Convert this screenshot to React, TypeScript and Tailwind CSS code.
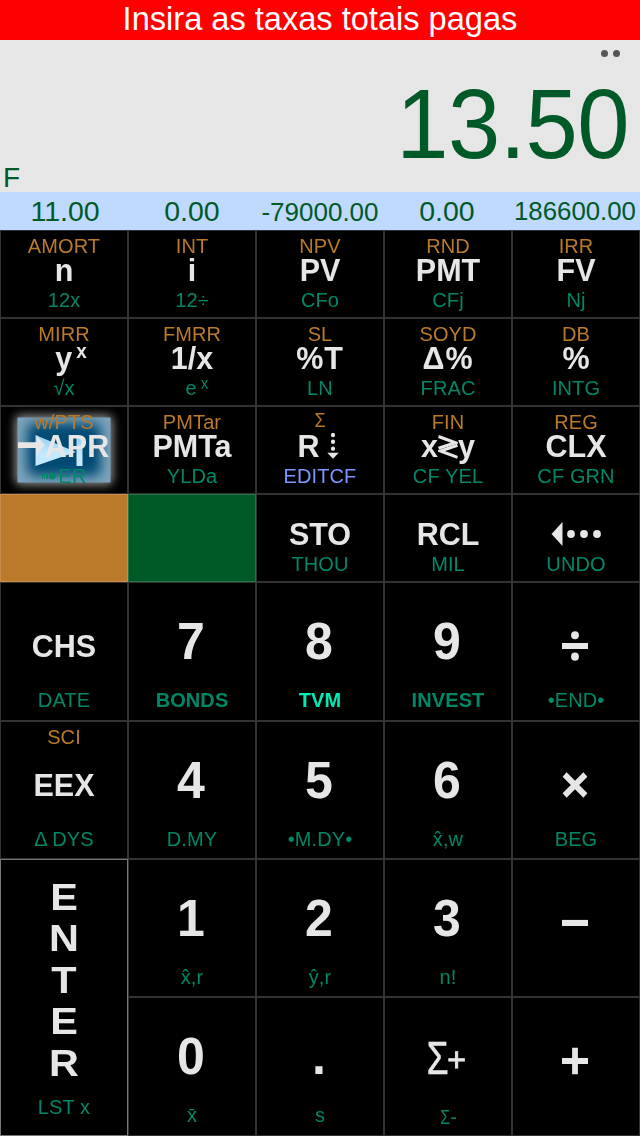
import type { ReactNode } from 'react';

type Tone = 'green' | 'blue' | 'strongGreen' | 'bright';

interface KeyDef {
  id: string;
  /** Gold shifted function, drawn above the main label */
  top?: ReactNode;
  main: ReactNode;
  /** Green shifted function, drawn below the main label */
  bottom?: ReactNode;
  tone?: Tone;
}

const toneClass: Record<Tone, string> = {
  green: 'text-[#008767]',
  blue: 'text-[#7f96ff]',
  strongGreen: 'text-[#008767] font-bold tracking-[-0.3px]',
  bright: 'text-[#00ebb4] font-bold tracking-[-0.3px]',
};

const registers = [
  { value: '11.00', size: 'text-[28.5px] pl-0.5' },
  { value: '0.00', size: 'text-[28.5px]' },
  { value: '-79000.00', size: 'text-[26px]' },
  { value: '0.00', size: 'text-[28.5px] pr-0.5' },
  { value: '186600.00', size: 'text-[25.8px] pr-0.5' },
];

function RollDown() {
  return (
    <span className="flex items-center gap-[7px] pr-1">
      R
      <svg className="h-[26px] w-[12px] shrink-0" viewBox="0 0 12 26" fill="#e6e6e6">
        <circle cx="6" cy="2.5" r="2.1" />
        <circle cx="6" cy="9" r="2.1" />
        <circle cx="6" cy="15.5" r="2.1" />
        <path d="M0.3 19.5h11.4L6 25z" />
      </svg>
    </span>
  );
}

function Swap() {
  return (
    <span className="flex items-center">
      x
      <svg className="mt-0.5 h-[24px] w-[20px] shrink-0" viewBox="0 0 20 24" fill="none" stroke="#e6e6e6" strokeWidth="3">
        <path d="M0.5 2l17 5.8L0.5 13.2" />
        <path d="M19.5 10.2L2.5 15.8l17 6" />
      </svg>
      y
    </span>
  );
}

function Backspace() {
  return (
    <svg className="mr-px h-[24px] w-[50px] shrink-0" viewBox="0 0 50 24" fill="#e6e6e6">
      <path d="M0.5 12L11.5 0.5v23z" />
      <circle cx="20" cy="12" r="3.9" />
      <circle cx="33" cy="12" r="3.9" />
      <circle cx="46" cy="12" r="3.9" />
    </svg>
  );
}

/** Arithmetic operators, 26px wide strokes */
function Operator({ kind }: { kind: 'divide' | 'times' | 'minus' | 'plus' }) {
  return (
    <svg className="mr-0.5 mb-0.5 h-[30px] w-[30px] shrink-0" viewBox="0 0 30 30" fill="none" stroke="#e6e6e6" strokeWidth="5.8">
      {kind === 'divide' && (
        <>
          <path d="M2 15h26" />
          <circle cx="15" cy="4.8" r="3.9" fill="#e6e6e6" stroke="none" />
          <circle cx="15" cy="25.2" r="3.9" fill="#e6e6e6" stroke="none" />
        </>
      )}
      {kind === 'times' && <path d="M4.6 5l20.8 20M25.4 5l-20.8 20" />}
      {kind === 'minus' && <path d="M2 15h26" />}
      {kind === 'plus' && <path d="M2 15h26M15 2.4v25.2" />}
    </svg>
  );
}

const functionKeys: KeyDef[] = [
  { id: 'n', top: 'AMORT', main: 'n', bottom: '12x' },
  { id: 'i', top: 'INT', main: 'i', bottom: '12÷' },
  { id: 'pv', top: 'NPV', main: 'PV', bottom: 'CFo' },
  { id: 'pmt', top: 'RND', main: 'PMT', bottom: 'CFj' },
  { id: 'fv', top: 'IRR', main: 'FV', bottom: 'Nj' },
  {
    id: 'yx',
    top: 'MIRR',
    main: <span className="pl-3.5">y<sup className="top-[-10px] ml-1 text-[19px]">x</sup></span>,
    bottom: '√x',
  },
  {
    id: 'inv',
    top: 'FMRR',
    main: '1/x',
    bottom: <span className="pl-2.5">e<sup className="top-[-6px] ml-1 text-[15px]">x</sup></span>,
  },
  { id: 'pctT', top: 'SL', main: <span className="tracking-[1px]">%T</span>, bottom: 'LN' },
  { id: 'dpct', top: 'SOYD', main: <span className="tracking-[1px]">Δ%</span>, bottom: 'FRAC' },
  { id: 'pct', top: 'DB', main: '%', bottom: 'INTG' },
  { id: 'apr', top: 'w/PTS', main: 'APR', bottom: 'ER' },
  { id: 'pmta', top: 'PMTar', main: 'PMTa', bottom: 'YLDa' },
  {
    id: 'roll',
    top: <span className="mb-[5px] scale-x-90">Σ</span>,
    main: <RollDown />,
    bottom: 'EDITCF',
    tone: 'blue',
  },
  { id: 'swap', top: 'FIN', main: <Swap />, bottom: 'CF YEL' },
  { id: 'clx', top: 'REG', main: 'CLX', bottom: 'CF GRN' },
];

const memoryKeys: KeyDef[] = [
  { id: 'sto', main: 'STO', bottom: 'THOU' },
  { id: 'rcl', main: 'RCL', bottom: 'MIL' },
  { id: 'back', main: <Backspace />, bottom: 'UNDO' },
];

const upperPad: KeyDef[] = [
  { id: 'chs', main: 'CHS', bottom: 'DATE' },
  { id: '7', main: '7', bottom: 'BONDS', tone: 'strongGreen' },
  { id: '8', main: '8', bottom: 'TVM', tone: 'bright' },
  { id: '9', main: '9', bottom: 'INVEST', tone: 'strongGreen' },
  { id: 'div', main: <Operator kind="divide" />, bottom: '•END•' },
  { id: 'eex', top: 'SCI', main: 'EEX', bottom: 'Δ DYS' },
  { id: '4', main: '4', bottom: 'D.MY' },
  { id: '5', main: '5', bottom: '•M.DY•' },
  { id: '6', main: '6', bottom: 'x̂,w' },
  { id: 'mul', main: <Operator kind="times" />, bottom: 'BEG' },
];

const lowerPad: KeyDef[] = [
  { id: '1', main: '1', bottom: 'x̂,r' },
  { id: '2', main: '2', bottom: 'ŷ,r' },
  { id: '3', main: '3', bottom: 'n!' },
  { id: 'sub', main: <Operator kind="minus" /> },
  { id: '0', main: '0', bottom: 'x̄' },
  { id: 'dot', main: '.', bottom: 's' },
  {
    id: 'sum',
    main: (
      <>
        <span className="mb-1 -ml-1.5 scale-x-80 text-[44px] [-webkit-text-stroke:0.6px_#e6e6e6]">Σ</span>
        <span className="-ml-1 text-[32px] [-webkit-text-stroke:0.9px_#e6e6e6]">+</span>
      </>
    ),
    bottom: (
      <span className="flex pt-1">
        <span className="scale-x-80">Σ</span>
        <span className="-ml-px">-</span>
      </span>
    ),
  },
  { id: 'add', main: <Operator kind="plus" /> },
];

/** Play-to-end image that glows behind the APR key */
function PlayOverlay() {
  return (
    <svg className="absolute inset-0 h-full w-full" viewBox="0 0 126 86">
      <defs>
        <filter id="glow" x="-30%" y="-30%" width="160%" height="160%">
          <feGaussianBlur stdDeviation="5" />
        </filter>
        <filter id="inner" x="-30%" y="-30%" width="160%" height="160%">
          <feGaussianBlur stdDeviation="6" />
        </filter>
        <linearGradient id="play" x1="0" y1="0" x2="0" y2="1">
          <stop offset="0" stopColor="#8fcdf2" />
          <stop offset="0.6" stopColor="#c4e9ff" />
        </linearGradient>
        <clipPath id="plate">
          <rect x="16.5" y="10.5" width="93" height="65" />
        </clipPath>
      </defs>
      <rect x="14" y="8" width="98" height="70" rx="6" fill="#8c8c8c" filter="url(#glow)" />
      <rect x="16.5" y="10.5" width="93" height="65" fill="#7ba3bc" />
      <g clipPath="url(#plate)">
        <rect x="26" y="16" width="74" height="53" rx="8" fill="#004a73" filter="url(#inner)" />
      </g>
      <path d="M34.5 28L75 45 34.5 59z" fill="url(#play)" />
      <rect x="75.5" y="30" width="6" height="29" fill="url(#play)" />
    </svg>
  );
}

function SmallKey({ keyDef }: { keyDef: KeyDef }) {
  const isApr = keyDef.id === 'apr';
  return (
    <button className="relative flex h-[88px] flex-col items-center border border-[#333] bg-black">
      {isApr && <PlayOverlay />}
      <span className="relative flex h-[30px] scale-y-105 items-center text-[20px] leading-none tracking-[0.1px] text-[#bb7a29]">
        {keyDef.top}
      </span>
      <span className="relative flex h-[17px] scale-y-105 items-center whitespace-nowrap text-[30.5px] leading-none font-bold text-[#e6e6e6]">
        {isApr && (
          <svg className="-ml-px h-[22px] w-[27px] shrink-0" viewBox="0 0 27 22" fill="#e6e6e6">
            <path d="M0 7.5h18.5V0.5L27 10l-8.5 10v-7.2H0z" />
          </svg>
        )}
        {keyDef.main}
      </span>
      <span className={`relative flex h-[39px] scale-y-105 items-center gap-0.5 pt-[5px] text-[20px] leading-none tracking-[0.1px] ${toneClass[keyDef.tone ?? 'green']}`}>
        {isApr && (
          <svg className="h-[8px] w-[15px] shrink-0" viewBox="0 0 15 8" fill="#008767">
            <path d="M0 1.5h1v5H0zM2 1.5h1v5H2zM4 1.5h2v5H4zM7 1.5h3V0l5 4-5 4V6.5H7z" />
          </svg>
        )}
        {keyDef.bottom}
      </span>
    </button>
  );
}

function TallKey({ keyDef }: { keyDef: KeyDef }) {
  const isDigit = /^[0-9.]$/.test(String(keyDef.main));
  const size = isDigit
    ? 'text-[50px] pb-[12px] pr-0.5'
    : keyDef.id === 'sum'
      ? 'pb-1'
      : typeof keyDef.main === 'string'
        ? 'text-[30.5px] pb-0.5'
        : '';
  return (
    <button className="flex flex-col items-center border border-[#333] bg-black">
      <span className="flex h-[31px] scale-y-105 items-center pb-px text-[20px] leading-none tracking-[0.1px] text-[#bb7a29]">
        {keyDef.top}
      </span>
      <span className={`flex h-[66px] scale-y-105 items-center leading-none text-[#e6e6e6] ${keyDef.id === 'sum' ? '' : 'font-bold'} ${size}`}>
        {keyDef.main}
      </span>
      <span className={`flex h-[39px] scale-y-105 items-center text-[20px] leading-none tracking-[0.1px] ${toneClass[keyDef.tone ?? 'green']}`}>
        {keyDef.bottom}
      </span>
    </button>
  );
}

function EnterKey() {
  return (
    <button className="flex flex-col items-center border border-[#777] bg-black pt-[17px]">
      {['E', 'N', 'T', 'E', 'R'].map((letter, index) => (
        <span key={index} className="flex h-[41.5px] scale-x-115 items-center text-[36px] leading-none font-bold text-[#e6e6e6]">
          {letter}
        </span>
      ))}
      <span className="mt-3 scale-y-105 text-[20px] leading-none tracking-[0.1px] text-[#008767]">LST x</span>
    </button>
  );
}

export default function App() {
  return (
    <div className="flex h-[1136px] w-[640px] flex-col overflow-hidden bg-black font-['Liberation_Sans',Arial,sans-serif]">
      {/* Prompt */}
      <header className="flex h-10 items-center justify-center bg-[#ff0000] pb-0.5 text-[32.6px] leading-none text-white">
        Insira as taxas totais pagas
      </header>

      {/* Display */}
      <div className="flex h-[152px] flex-col bg-[#e6e6e6] text-[#005a28]">
        <div className="flex h-7 items-center justify-end gap-[5px] pr-5 pb-0.5">
          <i className="size-[7px] rounded-full bg-[#555]" />
          <i className="size-[7px] rounded-full bg-[#555]" />
        </div>
        <div className="flex h-24 scale-y-105 items-center justify-end pt-4 pr-[11px] text-[94px] leading-none tracking-[-0.5px]">
          13.50
        </div>
        <div className="pl-[3px] text-[28px] leading-none">F</div>
      </div>

      {/* Financial registers */}
      <div className="grid h-[38px] grid-cols-5 bg-[#bfd9ff] pt-px text-[#005a28]">
        {registers.map((register, index) => (
          <span key={index} className={`flex items-center justify-center leading-none ${register.size}`}>
            {register.value}
          </span>
        ))}
      </div>

      <div className="grid grid-cols-5">
        {functionKeys.map((key) => (
          <SmallKey key={key.id} keyDef={key} />
        ))}
        <button className="h-[88px] border border-[#c98e49] bg-[#bb7a29]" aria-label="Gold shift" />
        <button className="h-[88px] border border-[#267346] bg-[#005a28]" aria-label="Green shift" />
        {memoryKeys.map((key) => (
          <SmallKey key={key.id} keyDef={key} />
        ))}
      </div>

      <div className="grid grid-cols-5 grid-rows-[139px_138px]">
        {upperPad.map((key) => (
          <TallKey key={key.id} keyDef={key} />
        ))}
      </div>

      <div className="grid grid-cols-[128px_512px]">
        <EnterKey />
        <div className="grid grid-cols-4 grid-rows-[138px_139px]">
          {lowerPad.map((key) => (
            <TallKey key={key.id} keyDef={key} />
          ))}
        </div>
      </div>
    </div>
  );
}
